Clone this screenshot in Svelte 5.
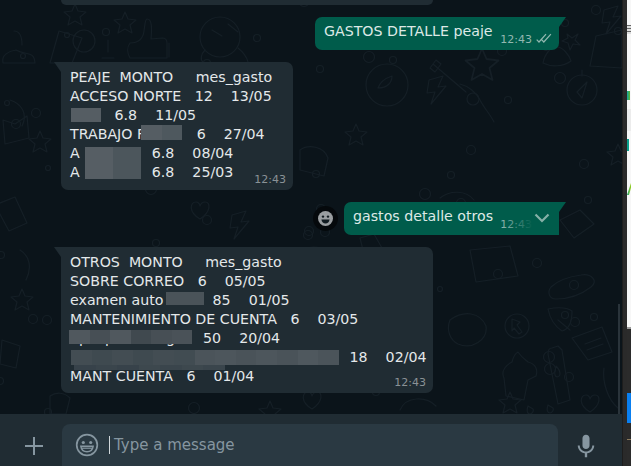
<script>
  const tile = (tones, w) => tones.map((c) => ({ c, w }));

  const incoming = [
    {
      cls: 'peaje',
      lines: [
        ['PEAJE  MONTO     mes_gasto'],
        ['ACCESO NORTE   12    13/05'],
        [{ gap: 31 }, '   6.8    11/05'],
        ['TRABAJO F', { gap: 38 }, '   6    27/04'],
        ['A ', { gap: 54 }, '   6.8    08/04'],
        ['A ', { gap: 54 }, '   6.8    25/03']
      ],
      blocks: [
        { x: 10, y: 46, h: 14, tiles: tile(['#555d63'], 30) },
        { x: 80, y: 63, h: 15, tiles: tile(['#555d63', '#4e585e'], 20.5) },
        { x: 24, y: 85, h: 32, tiles: tile(['#565e64', '#4c565c'], 28) }
      ]
    },
    {
      cls: 'otros',
      lines: [
        ['OTROS  MONTO     mes_gasto'],
        ['SOBRE CORREO   6    05/05'],
        ['examen auto', { gap: 40 }, '  85    01/05'],
        ['MANTENIMIENTO DE CUENTA   6    03/05'],
        [{ gap: 9 }, 'p', { gap: 17 }, 'p', { gap: 52 }, 'g', { gap: 19 }, '  50    20/04'],
        [{ gap: 266 }, '   18    02/04'],
        ['MANT CUENTA   6    01/04']
      ],
      blocks: [
        { x: 105, y: 45, h: 13, tiles: tile(['#4a5359'], 38) },
        { x: 8, y: 83, h: 14, tiles: tile(['#50585e', '#474f55', '#50585e', '#40494f', '#474f55', '#4a5258'], 20.5) },
        { x: 13, y: 118, h: 5, tiles: tile(['#37424a', '#3a454c', '#37424a', '#3d484e', '#3a454c', '#3d484e', '#3a454c'], 21.5) },
        { x: 10, y: 103, h: 15, tiles: tile(['#434d53', '#3f4a50', '#434d53', '#3f4a50', '#434d53', '#414c52', '#4b545a', '#4d565c', '#4a5359', '#4d565c', '#4a5359', '#4f585e', '#4b545a'], 20.6) }
      ]
    }
  ];

  // little rings scattered over the wallpaper
  let seed = 7;
  const rnd = () => (seed = (seed * 16807) % 2147483647) / 2147483647;
  const dots = Array.from({ length: 90 }, () => ({
    x: Math.round(rnd() * 622),
    y: Math.round(rnd() * 414),
    r: 2.5 + Math.round(rnd() * 3)
  }));

  const star = 'M0-11 3-4 11-3 5 2 7 10 0 6-7 10-5 2-11-3-3-4Z';
  const stars = [[75, 15, 1], [125, 23, 1], [482, 65, 1.5], [510, 403, 1], [618, 155, 1], [40, 142, 1], [22, 300, 1], [270, 412, 1], [356, 135, 1]];
  const hearts = [[590, 403], [312, 400], [200, 210]];
  const bolts = [[437, 90], [612, 20], [240, 225]];
</script>

<div class="screen">
  <div class="chat">
    <div class="messages">
      <svg class="wallpaper" width="622" height="414" viewBox="0 0 622 414" fill="none" aria-hidden="true">
        {#each dots as d}
          <circle cx={d.x} cy={d.y} r={d.r} />
        {/each}
        {#each stars as [x, y, s]}
          <path d={star} transform="translate({x} {y}) scale({s})" />
        {/each}
        {#each hearts as [x, y]}
          <path d="M0 9C-12 2-10-8-4-8-2-8 0-6 0-4 1-7 3-8 5-8 11-8 11 2 0 9Z" transform="translate({x} {y})" />
        {/each}
        {#each bolts as [x, y]}
          <path d="M-8-10 6-14 1-3 9-4-6 14-2 2-10 3Z" transform="translate({x} {y})" />
        {/each}
        <!-- thumb -->
        <path d="M130 43c8 0 13-4 14-12 1-6 1-12 3-12 5 0 5 9 4 20l11-1c4 0 5 3 5 5v15h-37c-3-5-3-11 0-15Zm39 0 0 14" />
        <!-- monkey -->
        <circle cx="220" cy="37" r="20" />
        <path d="M205 50c-4 4-5 10-2 12M238 48c5 4 9 10 10 14M212 30l10 6M228 24l10 8" />
        <!-- cup with orange -->
        <path d="M59 31 50 63 72 63 82 38Z" />
        <circle cx="84" cy="41" r="11" />
        <path d="M14 31c6 0 8 6 8 14M16 50c10 6 18 0 19 13H3c-2-8 6-12 13-13ZM108 40l0 12M102 58h12" />
        <!-- guitar -->
        <path d="M433 64 466 92M430 68l6-8 5 4-6 8Z" />
        <circle cx="473" cy="99" r="6" />
        <path d="M460 84c8 2 16 8 20 16 4 8 10 14 14 22" />
        <!-- compass -->
        <circle cx="582" cy="90" r="15" />
        <path d="M582 76v-6M587 82l-5 16-5-6Z" />
        <!-- glass and croissant -->
        <path d="M596 36 622 30 622 68 590 66Z" />
        <path d="M543 63c2-10 8-16 14-16s12 8 14 14c-8 6-20 6-28 2Z" />
        <path d="M567 34l5 4 6-4-3 6 5 5-7-1-3 6-2-7-6-2 6-3Z" />
        <!-- head with leaf -->
        <circle cx="387" cy="85" r="21" />
        <path d="M378 88c2-6 8-10 14-12 0 6-4 12-14 12Z" />
        <path d="M350 28c-4 6-4 12 0 15M3 120l12 4 12-8 2 22-24 6Z" />
        <!-- bread, leaf, cursor -->
        <path d="M556 299c14 0 26-5 35-12 8-6 0-14-10-12-14 2-24 6-30 12-4 5-2 12 5 12Z" />
        <path d="M548 309c10-2 18-2 24 2 0 10-2 18-10 20-6-4-12-12-14-22Z M558 320l12 10" />
        <circle cx="517" cy="326" r="12" />
        <path d="M512 319 520 322 517 325 522 332 519 334 514 328 512 331Z" />
        <!-- cupcake -->
        <path d="M504 378c-4-8 4-14 8-16 2-8 6-10 6-10 4 6 8 8 10 10 8 2 10 8 8 14l-8 4-4 20-18-4Z" />
        <!-- bottle -->
        <path d="M548 354c0-4 2-6 4-6l6-2 4 4 8 50-12 4Z" />
        <path d="M556 366c3 3 4 5 4 8s-4 4-5 1 1-6 1-9Z" />
        <!-- card -->
        <path d="M572 338 602 327 612 352 588 360Z M585 344l16-6M587 350l16-6" />
        <path d="M604 368c-2 14 4 32 14 40" />
        <path d="M548 405c-2 6 0 8 2 8s4-3 3-5Zm-20 1c-2 6 0 8 2 8s4-3 3-5Z" />
        <!-- left side -->
        <path d="M10 100c12 4 18 14 12 26M-5 205l20-8 12 26-18 8ZM20 250c10 6 12 18 6 30M2 340l18 6-4 22-16-4ZM50 396c6-4 14-4 20 2l-4 16H50Z" />
        <path d="M300 250c14-6 30-2 34 8l-10 18-30-6ZM470 250l40-4 8 30-42 6ZM450 320c14-10 30-8 36 6 2 14-14 24-28 18-8-4-12-14-8-24ZM400 410c6-14 26-14 36-4" />
        <path d="M440 198c10-8 26-8 34 2M360 238l14-4 8 14-18 6ZM560 220l20-10 14 14-20 14ZM300 150c8-6 24-4 28 8l-4 18-24-6ZM200 130c10-6 26-2 30 10l-8 16-22-6Z" />
      </svg>

      <div class="stub"></div>

      <div class="row out">
        <div class="bubble sent first">
          <span class="text">GASTOS DETALLE peaje</span>
          <span class="time">12:43</span>
          <svg class="ticks" width="16" height="11" viewBox="0 0 16 11" fill="none" stroke="currentColor" stroke-width="1.2" aria-hidden="true">
            <path d="M.7 6.6 3 9 10 1.2M5.6 6.6 7.8 9 14.9 1.2" />
          </svg>
        </div>
      </div>

      {@render received(incoming[0])}

      <div class="row out">
        <div class="react">
          <svg width="15" height="15" viewBox="0 0 15 15" aria-hidden="true">
            <circle cx="7.5" cy="7.5" r="7.5" fill="#9a9ea1" />
            <circle cx="5" cy="5.6" r="1.2" fill="#111b21" />
            <circle cx="10" cy="5.6" r="1.2" fill="#111b21" />
            <path d="M3.4 8.6h8.2c-.4 2.6-2 3.9-4.1 3.9S3.800 11.200 3.400 8.600Z" fill="#111b21" />
          </svg>
        </div>
        <div class="bubble sent second">
          <span class="text">gastos detalle otros</span>
          <span class="time">12:43</span>
          <div class="fade">
            <svg width="16" height="10" viewBox="0 0 16 10" fill="none" stroke="#85b0a7" stroke-width="2.2" aria-hidden="true">
              <path d="M1.500 1.500 8 8l6.500-6.500" />
            </svg>
          </div>
        </div>
      </div>

      {@render received(incoming[1])}

      <div class="scrollbar"></div>
    </div>

    <div class="composer">
      <svg class="plus" width="20" height="20" viewBox="0 0 20 20" aria-hidden="true">
        <path d="M9 1h2v8h8v2h-8v8H9v-8H1V9h8Z" fill="#8696a0" />
      </svg>
      <div class="input">
        <svg width="24" height="24" viewBox="0 0 24 24" fill="none" aria-hidden="true">
          <circle cx="12" cy="12" r="10.300" stroke="#8696a0" stroke-width="1.700" />
          <circle cx="8.300" cy="9.500" r="1.600" fill="#8696a0" />
          <circle cx="15.700" cy="9.500" r="1.600" fill="#8696a0" />
          <path d="M5.800 13.200h12.400c-.5 3.700-3 5.600-6.200 5.600s-5.700-1.900-6.200-5.600Z" stroke="#8696a0" stroke-width="1.400" />
          <path d="M6.500 15.200h11" stroke="#8696a0" stroke-width="1.200" />
        </svg>
        <span class="caret"></span>
        <span class="placeholder">Type a message</span>
      </div>
      <svg class="mic" width="24" height="24" viewBox="0 0 24 24" aria-hidden="true">
        <path fill="#8696a0" d="M11.999 14.942c2.001 0 3.531-1.53 3.531-3.531V4.35c0-2.001-1.53-3.531-3.531-3.531S8.469 2.35 8.469 4.35v7.061c0 2.001 1.53 3.531 3.53 3.531zm6.238-3.53c0 3.531-2.942 6.002-6.237 6.002s-6.237-2.471-6.237-6.002H3.761c0 4.001 3.178 7.297 7.061 7.885v3.884h2.354v-3.884c3.884-.588 7.061-3.884 7.061-7.885h-2z" />
      </svg>
    </div>
  </div>

  <div class="divider"></div>

  <div class="side">
    <div class="page">
      <span class="bit grey"></span>
      <span class="bit mix"></span>
      <div class="band"></div>
      <span class="bit teal"></span>
      <span class="bit lime"></span>
    </div>
    <div class="dock">
      <div class="blue"></div>
      <div class="mark"></div>
    </div>
  </div>
</div>

{#snippet received(msg)}
  <div class="row in">
    <div class="bubble got {msg.cls}">
      {#each msg.lines as line}
        <div class="line">
          {#each line as part}
            {#if typeof part === 'string'}{part}{:else}<span class="gap" style="width:{part.gap}px"></span>{/if}
          {/each}
        </div>
      {/each}
      {#each msg.blocks as b}
        <div class="blur" style="left:{b.x}px;top:{b.y}px;height:{b.h}px">
          {#each b.tiles as t}
            <span style="width:{t.w}px;background:{t.c}"></span>
          {/each}
        </div>
      {/each}
      <span class="time">12:43</span>
    </div>
  </div>
{/snippet}

<style>
  :global(body) {
    margin: 0;
    background: #0b141a;
  }

  .screen {
    display: flex;
    width: 631px;
    height: 466px;
    overflow: hidden;
    font-family: "DejaVu Sans", sans-serif;
  }

  .chat {
    width: 622px;
    display: flex;
    flex-direction: column;
    flex: none;
  }

  .messages {
    position: relative;
    height: 414px;
    background: #0b141a;
    display: flex;
    flex-direction: column;
    gap: 12px;
    overflow: hidden;
  }

  .wallpaper {
    position: absolute;
    inset: 0;
    stroke: #151f26;
    stroke-width: 1.200;
    stroke-linejoin: round;
    stroke-linecap: round;
  }

  .stub {
    position: relative;
    height: 5px;
    width: 372px;
    margin-left: 61px;
    background: #202c33;
    border-radius: 0 0 7px 7px;
  }

  .row {
    position: relative;
    display: flex;
    align-items: center;
  }

  .row.in {
    padding-left: 61px;
  }

  .row.out {
    justify-content: flex-end;
    padding-right: 63px;
    gap: 6px;
  }

  .bubble {
    position: relative;
    font-size: 14.2px;
    line-height: 19px;
    color: #e4e8ea;
    border-radius: 7px;
  }

  .got {
    background: #202c33;
    border-top-left-radius: 0;
    padding: 6px 0 8px 9px;
    box-sizing: border-box;
  }

  .got::before {
    content: "";
    position: absolute;
    left: -7px;
    top: 0;
    width: 7px;
    height: 10px;
    background: #202c33;
    clip-path: polygon(0 0, 100% 0, 100% 100%);
  }

  .peaje {
    width: 232px;
  }

  .otros {
    width: 372px;
    padding-bottom: 7px;
  }

  .line {
    white-space: pre;
    height: 19px;
  }

  .gap {
    display: inline-block;
  }

  .blur {
    position: absolute;
    display: flex;
  }

  .blur span {
    display: block;
    height: 100%;
  }

  .sent {
    background: #005c4b;
    border-top-right-radius: 0;
    height: 33px;
    box-sizing: border-box;
    padding: 5px 0 0 9px;
  }

  .sent::after {
    content: "";
    position: absolute;
    right: -7px;
    top: 0;
    width: 7px;
    height: 10px;
    background: #005c4b;
    clip-path: polygon(0 0, 100% 0, 0 100%);
  }

  .first {
    width: 244px;
  }

  .second {
    width: 215px;
  }

  .text {
    color: #dde9e6;
  }

  .time {
    position: absolute;
    right: 7px;
    bottom: 3px;
    font-size: 11px;
    line-height: 15px;
    color: #8a9296;
  }

  .sent .time {
    color: #92b8b0;
    right: 27px;
    bottom: 3px;
  }

  .ticks {
    position: absolute;
    right: 7px;
    bottom: 6px;
    color: #92b8b0;
  }

  .fade {
    position: absolute;
    right: 0;
    top: 0;
    width: 58px;
    height: 33px;
    border-top-right-radius: 7px;
    background: linear-gradient(to right, rgba(0, 92, 75, 0) 0%, #005c4b 55%);
    display: flex;
    justify-content: flex-end;
    align-items: center;
    padding: 0 9px 2px 0;
    box-sizing: border-box;
  }

  .react {
    width: 25px;
    height: 25px;
    border-radius: 50%;
    background: #05090c;
    display: flex;
    align-items: center;
    justify-content: center;
  }

  .scrollbar {
    position: absolute;
    right: 2px;
    top: 304px;
    width: 2px;
    height: 110px;
    background: #2a343b;
  }

  .composer {
    height: 52px;
    background: #202c33;
    display: flex;
    align-items: flex-end;
    overflow: hidden;
  }

  .plus {
    margin: 0 18px 10px 24px;
    flex: none;
  }

  .input {
    width: 496px;
    height: 42px;
    flex: none;
    background: #2a3942;
    border-radius: 8px 8px 0 0;
    display: flex;
    align-items: center;
    padding-left: 13px;
    box-sizing: border-box;
    color: #8696a0;
    font-size: 15px;
  }

  .caret {
    width: 1px;
    height: 18px;
    background: #d1d7db;
    margin-left: 10px;
    margin-right: 4px;
  }

  .mic {
    margin: 0 0 8px 16px;
    flex: none;
  }

  .divider {
    width: 5px;
    flex: none;
    background: #2a2a2a;
    border-left: 1px solid #1d1d1d;
    box-sizing: border-box;
  }

  .side {
    flex: 1;
    display: flex;
    flex-direction: column;
  }

  .page {
    height: 327px;
    background: #f7f7f7;
    border-bottom: 2px solid #9b9b9b;
    overflow: hidden;
    display: flex;
    flex-direction: column;
  }

  .bit {
    display: block;
  }

  .grey {
    margin-top: 25px;
    width: 4px;
    height: 9px;
    background: repeating-linear-gradient(#666 0 1px, #ddd 1px 3px);
  }

  .mix {
    margin-top: 57px;
    width: 3px;
    height: 9px;
    background: linear-gradient(to right, #12a5a5, #5fb52a);
  }

  .band {
    height: 22px;
    margin-top: 9px;
    background: #ececec;
  }

  .teal {
    margin-top: 8px;
    width: 2px;
    height: 12px;
    background: #0aa08c;
  }

  .lime {
    margin-top: 32px;
    width: 4px;
    height: 12px;
    background: linear-gradient(to right, #1aa37a, #9ccf1a);
    clip-path: polygon(0 100%, 100% 0, 100% 40%, 50% 100%);
  }

  .dock {
    flex: 1;
    background: #2b2b2b;
    padding-top: 64px;
  }

  .blue {
    height: 30px;
    background: #0a7ff0;
  }

  .mark {
    height: 1px;
    margin-top: 16px;
    background: #8c7a5c;
  }
</style>
